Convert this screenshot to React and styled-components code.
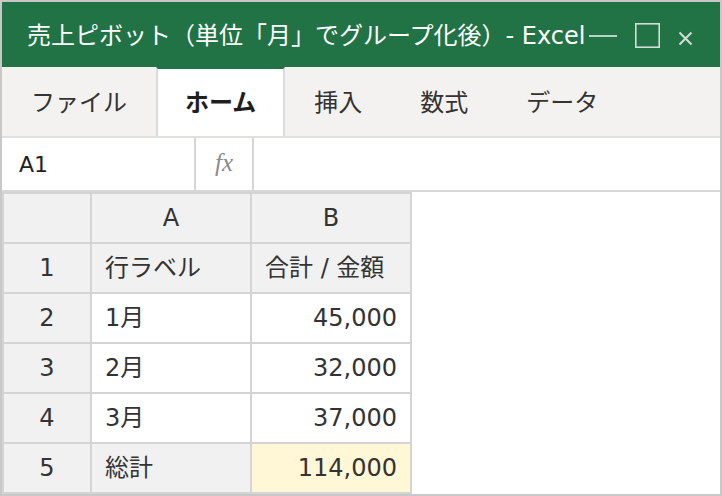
import React from 'react';
import styled, { createGlobalStyle, css } from 'styled-components';

const Global = createGlobalStyle`
  html, body { margin: 0; padding: 0; background: #fff; }
  body { font-family: "DejaVu Sans", "Noto Sans CJK JP", sans-serif; }
  * { box-sizing: border-box; }
`;

const Window = styled.div`
  width: 722px;
  height: 496px;
  border: 2px solid #c8c8c8;
  display: flex;
  flex-direction: column;
  background: #fff;
  overflow: hidden;
`;

const TitleBar = styled.header`
  flex: none;
  height: 65px;
  background: #217346;
  color: #fff;
  display: flex;
  align-items: center;
  padding: 2px 27px 0 25px;
`;

const Title = styled.div`
  flex: 1;
  min-width: 0;
  white-space: nowrap;
  overflow: hidden;
  font-size: 24px;
  line-height: 30px;
`;

const Controls = styled.div`
  flex: none;
  display: flex;
  align-items: center;
  gap: 18px;
`;

const ControlIcon = styled.svg`
  display: block;
  flex: none;
  margin-top: ${p => p.$dy || 0}px;
`;

const Ribbon = styled.nav`
  flex: none;
  height: 71px;
  display: flex;
  background: #f3f2f1;
  border-bottom: 2px solid #e1dfdd;
`;

const Tab = styled.div`
  display: flex;
  align-items: center;
  padding: 0 27px;
  border: 2px solid transparent;
  border-bottom: none;
  font-size: 24px;
  line-height: 30px;
  color: #333;
  ${p => p.$active && css`
    background: #fff;
    border-color: #dcdcdc;
    border-top-color: #217346;
    color: #1f1f1f;
    font-weight: 700;
  `}
`;

const FormulaBar = styled.div`
  flex: none;
  height: 54px;
  display: flex;
  border-bottom: 2px solid #d6d6d6;
`;

const NameBox = styled.div`
  width: 194px;
  border-right: 2px solid #d6d6d6;
  display: flex;
  align-items: center;
  padding-left: 17px;
  font-size: 22px;
  color: #222;
`;

const FxBox = styled.div`
  width: 58px;
  border-right: 2px solid #d6d6d6;
  display: flex;
  align-items: center;
  justify-content: center;
  font-family: "Liberation Serif", "DejaVu Serif", serif;
  font-style: italic;
  font-size: 25px;
  color: #8a8a8a;
  padding-bottom: 2px;
`;

const FormulaInput = styled.div`
  flex: 1;
`;

const Sheet = styled.div`
  display: grid;
  grid-template-columns: 86px 158px 158px;
  grid-auto-rows: 48px;
  gap: 2px;
  padding: 2px;
  width: max-content;
  background: #d4d4d4;
`;

const Cell = styled.div`
  display: flex;
  align-items: center;
  padding: 0 13px;
  font-size: 24px;
  line-height: 28px;
  color: #333;
  white-space: nowrap;
  background: ${p => (p.$tone === 'head' ? '#f1f1f1' : p.$tone === 'total' ? '#fff7d6' : '#fff')};
  justify-content: ${p => (p.$align === 'center' ? 'center' : p.$align === 'right' ? 'flex-end' : 'flex-start')};
`;

const rows = [
  { n: 1, a: '行ラベル', b: '合計 / 金額', head: true },
  { n: 2, a: '1月', b: '45,000' },
  { n: 3, a: '2月', b: '32,000' },
  { n: 4, a: '3月', b: '37,000' },
  { n: 5, a: '総計', b: '114,000', total: true },
];

export default function App() {
  return (
    <>
      <Global />
      <Window>
        <TitleBar>
          <Title>売上ピボット（単位「月」でグループ化後）- Excel</Title>
          <Controls>
            <ControlIcon width="28" height="4" viewBox="0 0 28 4">
              <line x1="0" y1="2" x2="28" y2="2" stroke="#e4eee8" strokeWidth="1.6" />
            </ControlIcon>
            <ControlIcon width="25" height="25" viewBox="0 0 25 25">
              <rect x="0.8" y="0.8" width="23.4" height="23.4" fill="none" stroke="#d3ddd7" strokeWidth="1.6" />
            </ControlIcon>
            <ControlIcon width="15" height="15" viewBox="0 0 15 15" $dy={6}>
              <path d="M1.5 1.5 L13.5 13.5 M13.5 1.5 L1.5 13.5" stroke="#d3ddd7" strokeWidth="2" fill="none" />
            </ControlIcon>
          </Controls>
        </TitleBar>
        <Ribbon>
          <Tab>ファイル</Tab>
          <Tab $active>ホーム</Tab>
          <Tab>挿入</Tab>
          <Tab>数式</Tab>
          <Tab>データ</Tab>
        </Ribbon>
        <FormulaBar>
          <NameBox>A1</NameBox>
          <FxBox>fx</FxBox>
          <FormulaInput />
        </FormulaBar>
        <Sheet>
          <Cell $tone="head" />
          <Cell $tone="head" $align="center">A</Cell>
          <Cell $tone="head" $align="center">B</Cell>
          {rows.map(r => (
            <React.Fragment key={r.n}>
              <Cell $tone="head" $align="center">{r.n}</Cell>
              <Cell $tone={r.head || r.total ? 'head' : undefined}>{r.a}</Cell>
              <Cell
                $tone={r.head ? 'head' : r.total ? 'total' : undefined}
                $align={r.head ? 'left' : 'right'}
              >
                {r.b}
              </Cell>
            </React.Fragment>
          ))}
        </Sheet>
      </Window>
    </>
  );
}
